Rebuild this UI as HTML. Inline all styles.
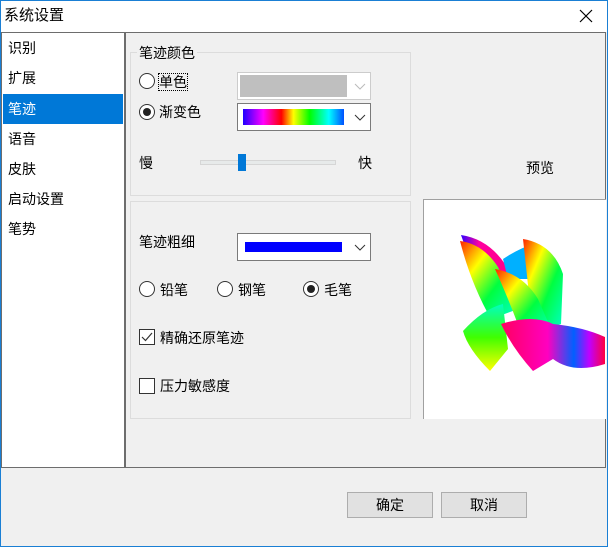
<!DOCTYPE html>
<html><head><meta charset="utf-8"><style>
*{margin:0;padding:0;box-sizing:border-box}
body{width:608px;height:547px;background:#f0f0f0;position:relative;overflow:hidden;font-family:"Liberation Sans","Noto Sans CJK SC",sans-serif;font-size:14px;color:#000}
.a{position:absolute}
.t{position:absolute;white-space:nowrap;line-height:16px}
.radio{position:absolute;width:16px;height:16px;border:1px solid #333;border-radius:50%;background:#fff}
.radio.on::after{content:"";position:absolute;left:3px;top:3px;width:8px;height:8px;border-radius:50%;background:#222}
.chk{position:absolute;width:16px;height:16px;border:1px solid #333;background:#fff}
.btn{position:absolute;width:86px;height:26px;border:1px solid #adadad;background:#e1e1e1;text-align:center;line-height:24px}
.gb{position:absolute;border:1px solid #dcdcdc}
.dd{position:absolute;border:1px solid #7a7a7a;background:#fff}
</style></head><body>
<div class="a" style="left:0;top:0;width:608px;height:547px;border:1px solid #1a7fd4"></div>
<div class="a" style="left:1px;top:1px;width:606px;height:31px;background:#fff"></div>
<div class="t" style="left:4px;top:8px;font-size:15px">系统设置</div>
<svg class="a" style="left:578px;top:8px" width="16" height="16"><path d="M2 2L14 14M14 2L2 14" stroke="#000" stroke-width="1.2"/></svg>
<div class="a" style="left:1px;top:32px;width:605px;height:436px;border:1px solid #6d6d6d;background:#f0f0f0"></div>
<div class="a" style="left:2px;top:33px;width:122px;height:434px;background:#fff"></div>
<div class="a" style="left:124px;top:33px;width:2px;height:434px;background:#6d6d6d"></div>
<div class="a" style="left:3px;top:94px;width:120px;height:30px;background:#0078d7"></div>
<div class="t" style="left:8px;top:40px">识别</div>
<div class="t" style="left:8px;top:70px">扩展</div>
<div class="t" style="left:8px;top:101px;color:#fff">笔迹</div>
<div class="t" style="left:8px;top:131px">语音</div>
<div class="t" style="left:8px;top:161px">皮肤</div>
<div class="t" style="left:8px;top:191px">启动设置</div>
<div class="t" style="left:8px;top:221px">笔势</div>

<div class="gb" style="left:130px;top:52px;width:281px;height:144px"></div>
<div class="t" style="left:137px;top:45px;background:#f0f0f0;padding:0 2px">笔迹颜色</div>
<div class="radio" style="left:139px;top:73px"></div>
<div class="t" style="left:159px;top:74px;outline:1px dotted #000">单色</div>
<div class="a" style="left:237px;top:72px;width:134px;height:28px;border:1px solid #ccc;background:#fff"></div>
<div class="a" style="left:240px;top:75px;width:107px;height:22px;background:#bfbfbf"></div>
<svg class="a" style="left:354px;top:83px" width="12" height="8"><path d="M1 1L6 6L11 1" stroke="#bbb" fill="none"/></svg>
<div class="radio on" style="left:139px;top:104px"></div>
<div class="t" style="left:159px;top:104px">渐变色</div>
<div class="dd" style="left:237px;top:103px;width:134px;height:28px"></div>
<div class="a" style="left:243px;top:109px;width:101px;height:16px;background:linear-gradient(90deg,#2000ff,#ff00ff 20%,#ff0000 38%,#ffff00 50%,#00ff00 66%,#00ffff 85%,#0050ff)"></div>
<svg class="a" style="left:354px;top:114px" width="12" height="8"><path d="M1 1L6 6L11 1" stroke="#333" fill="none"/></svg>
<div class="t" style="left:139px;top:155px">慢</div>
<div class="a" style="left:200px;top:160px;width:136px;height:5px;background:#e7eaea;border:1px solid #d6d6d6"></div>
<div class="a" style="left:238px;top:154px;width:8px;height:17px;background:#0078d7"></div>
<div class="t" style="left:358px;top:155px">快</div>

<div class="gb" style="left:130px;top:201px;width:281px;height:218px"></div>
<div class="t" style="left:139px;top:234px">笔迹粗细</div>
<div class="dd" style="left:237px;top:233px;width:134px;height:28px"></div>
<div class="a" style="left:245px;top:242px;width:97px;height:10px;background:#0000ff"></div>
<svg class="a" style="left:354px;top:244px" width="12" height="8"><path d="M1 1L6 6L11 1" stroke="#333" fill="none"/></svg>
<div class="radio" style="left:139px;top:281px"></div><div class="t" style="left:160px;top:282px">铅笔</div>
<div class="radio" style="left:217px;top:281px"></div><div class="t" style="left:238px;top:282px">钢笔</div>
<div class="radio on" style="left:303px;top:281px"></div><div class="t" style="left:324px;top:282px">毛笔</div>
<div class="chk" style="left:139px;top:329px"></div>
<svg class="a" style="left:139px;top:329px" width="16" height="16"><path d="M3 8L6.5 11.5L13 4" stroke="#333" fill="none" stroke-width="1.2"/></svg>
<div class="t" style="left:160px;top:330px">精确还原笔迹</div>
<div class="chk" style="left:139px;top:378px"></div>
<div class="t" style="left:160px;top:378px">压力敏感度</div>

<div class="t" style="left:526px;top:160px">预览</div>
<div class="a" style="left:423px;top:199px;width:183px;height:220px;background:#fff;border-left:1px solid #a0a0a0;border-top:1px solid #a0a0a0"></div>
<svg class="a" style="left:423px;top:199px" width="183" height="220">
<defs>
<linearGradient id="g1" x1="0" y1="0" x2="1" y2="0"><stop offset="0" stop-color="#3000ff"/><stop offset=".3" stop-color="#ff00a0"/><stop offset="1" stop-color="#ff0080"/></linearGradient>
<linearGradient id="g2" x1="0" y1="0" x2="1" y2="1"><stop offset="0" stop-color="#ff2000"/><stop offset=".3" stop-color="#ffff00"/><stop offset=".6" stop-color="#00ff40"/><stop offset="1" stop-color="#00ffd0"/></linearGradient>
<linearGradient id="g3" x1="0" y1="0" x2="1" y2="0"><stop offset="0" stop-color="#ff0060"/><stop offset=".45" stop-color="#ff00c0"/><stop offset=".7" stop-color="#0060ff"/><stop offset=".85" stop-color="#c000ff"/><stop offset="1" stop-color="#ff0040"/></linearGradient>
<linearGradient id="g4" x1="0" y1="0" x2="0" y2="1"><stop offset="0" stop-color="#00ffc0"/><stop offset=".5" stop-color="#40ff00"/><stop offset="1" stop-color="#ffff00"/></linearGradient>
</defs>
<path d="M38 36Q65 40 82 65L98 95L75 115Q55 85 38 36Z" fill="url(#g1)"/>
<path d="M80 60Q95 50 110 45L105 80L85 80Z" fill="#00b0ff"/>
<path d="M100 40Q130 45 140 75L138 125L110 135Q105 85 100 40Z" fill="url(#g2)"/>
<path d="M37 42Q60 45 75 68L95 110L68 120Q48 85 37 42Z" fill="url(#g2)"/>
<path d="M40 132Q60 110 80 105L85 150L67 172Q45 150 40 132Z" fill="url(#g4)"/>
<path d="M72 70Q100 75 115 100L128 130L100 140Q90 110 72 70Z" fill="url(#g2)"/>
<path d="M78 125Q110 115 130 125Q160 128 182 138L182 165Q150 175 130 160L110 172Q90 150 78 125Z" fill="url(#g3)"/>
</svg>

<div class="btn" style="left:347px;top:492px">确定</div>
<div class="btn" style="left:441px;top:492px">取消</div>
</body></html>
